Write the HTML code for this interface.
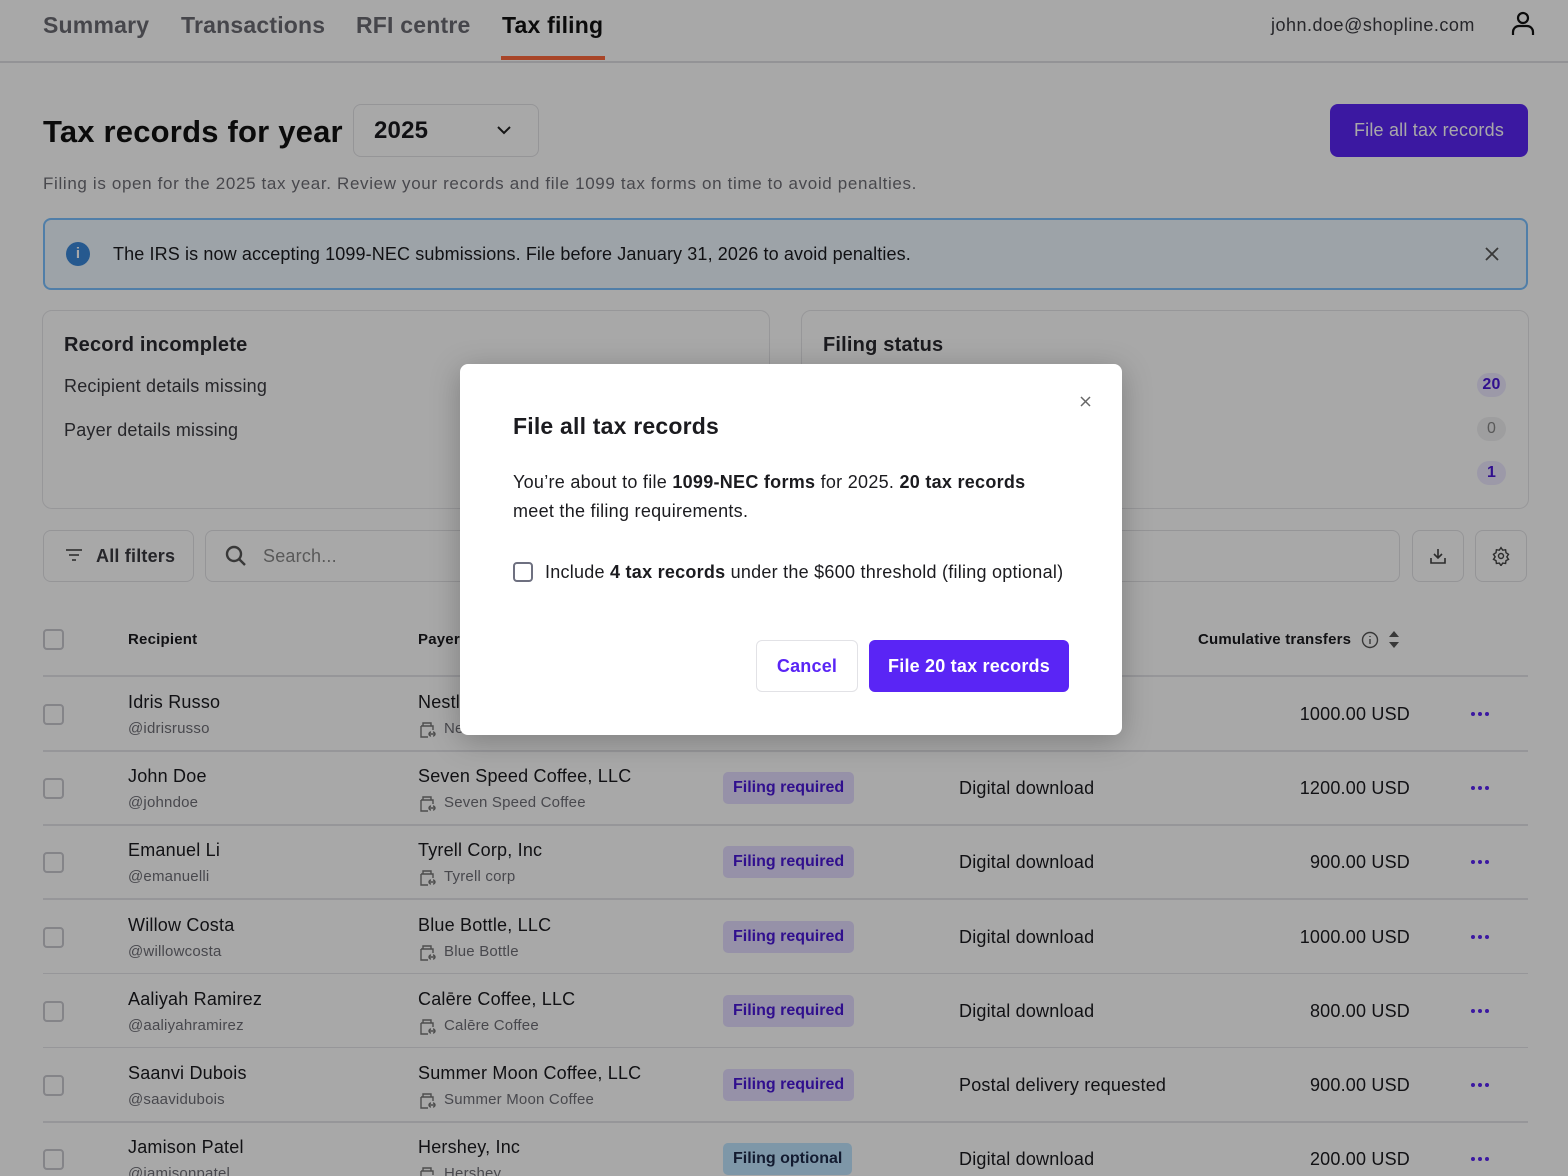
<!DOCTYPE html>
<html style="width:1568px;height:1176px;overflow:hidden"><head><meta charset="utf-8"><style>
*{box-sizing:border-box;margin:0;padding:0}
body{width:1568px;height:1176px;overflow:hidden;background:#fff;font-family:"Liberation Sans",sans-serif;color:#1b1b1f;position:relative;letter-spacing:0.2px}
.a{position:absolute;white-space:nowrap}
.nav{font-size:23px;font-weight:bold;color:#6b6b73;top:12px}
.card{position:absolute;border:1.5px solid #e6e6e9;border-radius:10px}
.btn{position:absolute;border:1.5px solid #e2e2e6;border-radius:8px}
.cb{position:absolute;width:21px;height:21px;border:2px solid #c9c9cf;border-radius:4px;left:43px}
.name{font-size:18px;color:#1b1b1f}
.sub{font-size:15px;color:#6e6e76}
.pill{position:absolute;left:723px;height:32px;border-radius:5px;background:#e4dcff;color:#4a17d8;font-weight:bold;font-size:16px;line-height:32px;padding:0 10px;letter-spacing:0}
.line{position:absolute;left:43px;width:1485px;height:1.5px;background:#e4e4e8}
.dots{position:absolute;left:1471px;font-size:0}
.dots i{display:inline-block;width:4px;height:4px;border-radius:50%;background:#5a25f5;margin-right:3px}
#ov{position:absolute;left:0;top:0;width:1568px;height:1176px;background:rgba(0,0,0,0.34)}
</style></head><body>
<div class="a nav" style="left:43px">Summary</div>
<div class="a nav" style="left:181px">Transactions</div>
<div class="a nav" style="left:356px">RFI centre</div>
<div class="a nav" style="left:502px;color:#111">Tax filing</div>
<div class="a" style="left:501px;top:56px;width:104px;height:4px;background:#ff6a3d"></div>
<div class="a" style="left:0;top:61px;width:1568px;height:1.5px;background:#e0e0e4"></div>
<div class="a" style="left:1271px;top:15px;font-size:18px;color:#3a3a40;letter-spacing:0.5px">john.doe@shopline.com</div>
<svg class="a" style="left:1510px;top:10px" width="26" height="26" viewBox="0 0 26 26" fill="none" stroke="#111" stroke-width="2.2"><circle cx="13" cy="8" r="5"/><path d="M3 25v-3a6 6 0 0 1 6-6h8a6 6 0 0 1 6 6v3"/></svg>

<div class="a" style="left:43px;top:114px;font-size:31px;font-weight:bold;color:#111">Tax records for year</div>
<div class="btn" style="left:353px;top:104px;width:186px;height:53px"></div>
<div class="a" style="left:374px;top:117px;font-size:24px;font-weight:bold">2025</div>
<svg class="a" style="left:496px;top:124px" width="16" height="12" viewBox="0 0 16 12" fill="none" stroke="#222" stroke-width="2"><path d="M2 3l6 6 6-6"/></svg>
<div class="a" style="left:1330px;top:104px;width:198px;height:53px;border-radius:8px;background:#5a25f5;color:#fff;font-size:18px;line-height:53px;text-align:center">File all tax records</div>
<div class="a" style="left:43px;top:174px;font-size:17px;color:#6e6e76;letter-spacing:0.65px">Filing is open for the 2025 tax year. Review your records and file 1099 tax forms on time to avoid penalties.</div>

<div class="a" style="left:43px;top:218px;width:1485px;height:72px;border:2px solid #7ac0ff;border-radius:8px;background:#eff8ff"></div>
<div class="a" style="left:66px;top:242px;width:24px;height:24px;border-radius:50%;background:#3a87d9;color:#fff;font-size:15px;font-weight:bold;text-align:center;line-height:24px">i</div>
<div class="a" style="left:113px;top:244px;font-size:18px;color:#1b1b1f;letter-spacing:0.12px">The IRS is now accepting 1099-NEC submissions. File before January 31, 2026 to avoid penalties.</div>
<svg class="a" style="left:1484px;top:246px" width="16" height="16" viewBox="0 0 16 16" stroke="#555" stroke-width="1.8"><path d="M2 2l12 12M14 2L2 14"/></svg>

<div class="card" style="left:42px;top:310px;width:728px;height:199px"></div>
<div class="a" style="left:64px;top:334px;font-size:20px;font-weight:bold;color:#2a2a30">Record incomplete</div>
<div class="a" style="left:64px;top:376px;font-size:18px;color:#3a3a40">Recipient details missing</div>
<div class="a" style="left:64px;top:420px;font-size:18px;color:#3a3a40">Payer details missing</div>
<div class="card" style="left:801px;top:310px;width:728px;height:199px"></div>
<div class="a" style="left:823px;top:334px;font-size:20px;font-weight:bold;color:#2a2a30">Filing status</div>
<div class="a" style="left:1477px;top:373px;width:29px;height:24px;border-radius:12px;background:#ede8ff;color:#4a17d8;font-weight:bold;font-size:16px;text-align:center;line-height:24px">20</div>
<div class="a" style="left:1477px;top:417px;width:29px;height:24px;border-radius:12px;background:#f0f0f2;color:#888;font-size:16px;text-align:center;line-height:24px">0</div>
<div class="a" style="left:1477px;top:461px;width:29px;height:24px;border-radius:12px;background:#ede8ff;color:#4a17d8;font-weight:bold;font-size:16px;text-align:center;line-height:24px">1</div>

<div class="btn" style="left:43px;top:530px;width:151px;height:52px"></div>
<svg class="a" style="left:65px;top:548px" width="18" height="14" viewBox="0 0 18 14" stroke="#555" stroke-width="1.8"><path d="M1 2h16M4 7h10M7 12h4"/></svg>
<div class="a" style="left:96px;top:546px;font-size:18px;font-weight:bold;color:#3a3a40">All filters</div>
<div class="btn" style="left:205px;top:530px;width:1195px;height:52px"></div>
<svg class="a" style="left:225px;top:545px" width="22" height="22" viewBox="0 0 22 22" fill="none" stroke="#555" stroke-width="2.4"><circle cx="9" cy="9" r="7"/><path d="M14 14l6 6"/></svg>
<div class="a" style="left:263px;top:546px;font-size:18px;color:#888">Search...</div>
<div class="btn" style="left:1412px;top:530px;width:52px;height:52px"></div>
<svg class="a" style="left:1429px;top:547px" width="18" height="18" viewBox="0 0 18 18" fill="none" stroke="#444" stroke-width="1.6"><path d="M9 2v9M5 7l4 4 4-4M2 11v5h14v-5"/></svg>
<div class="btn" style="left:1475px;top:530px;width:52px;height:52px"></div>
<svg class="a" style="left:1491px;top:546px" width="20" height="20" viewBox="0 0 24 24" fill="none" stroke="#444" stroke-width="1.7"><circle cx="12" cy="12" r="3"/><path d="M12 2l2 3 3.5-.5.5 3.5 3 2-2 3 2 3-3 1.5-.5 3.5-3.5-.5-2 3-2-3-3.5.5-.5-3.5-3-1.5 2-3-2-3 3-2 .5-3.5L10 5z"/></svg>

<div class="cb" style="top:629px"></div>
<div class="a" style="left:128px;top:631px;font-size:15px;font-weight:bold">Recipient</div>
<div class="a" style="left:418px;top:631px;font-size:15px;font-weight:bold">Payer</div>
<div class="a" style="left:1198px;top:631px;font-size:15px;font-weight:bold">Cumulative transfers</div>
<svg class="a" style="left:1361px;top:631px" width="18" height="18" viewBox="0 0 18 18" fill="none" stroke="#555" stroke-width="1.4"><circle cx="9" cy="9" r="7.5"/><path d="M9 8v5M9 5v1"/></svg>
<svg class="a" style="left:1388px;top:630px" width="12" height="19" viewBox="0 0 12 19" fill="#555"><path d="M6 1l5 6H1zM6 18l5-6H1z"/></svg>
<div class="line" style="top:675px"></div>

<div id="rows"></div>
<script>
var R=[["Idris Russo","@idrisrusso","Nestl\u00e9","Nestl\u00e9","r","Digital download","1000.00 USD"],
["John Doe","@johndoe","Seven Speed Coffee, LLC","Seven Speed Coffee","r","Digital download","1200.00 USD"],
["Emanuel Li","@emanuelli","Tyrell Corp, Inc","Tyrell corp","r","Digital download","900.00 USD"],
["Willow Costa","@willowcosta","Blue Bottle, LLC","Blue Bottle","r","Digital download","1000.00 USD"],
["Aaliyah Ramirez","@aaliyahramirez","Cal\u0113re Coffee, LLC","Cal\u0113re Coffee","r","Digital download","800.00 USD"],
["Saanvi Dubois","@saavidubois","Summer Moon Coffee, LLC","Summer Moon Coffee","r","Postal delivery requested","900.00 USD"],
["Jamison Patel","@jamisonpatel","Hershey, Inc","Hershey","o","Digital download","200.00 USD"]];
var h="";
R.forEach(function(r,i){var c=714+i*74.2;var t=c-26;
h+='<div class="cb" style="top:'+(c-10)+'px"></div>';
h+='<div class="a name" style="left:128px;top:'+(t+4)+'px">'+r[0]+'</div>';
h+='<div class="a sub" style="left:128px;top:'+(t+32)+'px">'+r[1]+'</div>';
h+='<div class="a name" style="left:418px;top:'+(t+4)+'px">'+r[2]+'</div>';
h+='<svg class="a" style="left:419px;top:'+(t+33)+'px" width="18" height="18" viewBox="0 0 18 18" fill="none" stroke="#777" stroke-width="1.4"><path d="M4 5V2h8v3M2 5h12v4M2 5v11h7M10 13h6M12 11a2 2 0 1 0 0 4M14 11a2 2 0 1 1 0 4"/></svg>';
h+='<div class="a sub" style="left:444px;top:'+(t+32)+'px">'+r[3]+'</div>';
if(i>0)h+='<div class="pill" style="top:'+(c-16)+'px;'+(r[4]=="o"?'background:#bfe6ff;color:#1e2a4a':'')+'">Filing '+(r[4]=="o"?'optional':'required')+'</div>';
if(i>0)h+='<div class="a name" style="left:959px;top:'+(c-10)+'px">'+r[5]+'</div>';
h+='<div class="a name" style="right:158px;top:'+(c-10)+'px">'+r[6]+'</div>';
h+='<div class="dots" style="top:'+(c-2)+'px"><i></i><i></i><i></i></div>';
if(i<6)h+='<div class="line" style="top:'+(c+36)+'px"></div>';});
document.getElementById("rows").innerHTML=h;
</script>

<div id="ov"></div>
<div class="a" style="left:460px;top:364px;width:662px;height:371px;background:#fff;border-radius:8px;box-shadow:0 6px 30px rgba(0,0,0,0.25)"></div>
<svg class="a" style="left:1080px;top:396px" width="11" height="11" viewBox="0 0 11 11" stroke="#666" stroke-width="1.5"><path d="M1 1l9 9M10 1L1 10"/></svg>
<div class="a" style="left:513px;top:413px;font-size:23px;font-weight:bold;color:#1b1b1f">File all tax records</div>
<div class="a" style="left:513px;top:468px;font-size:18px;line-height:29px;color:#1b1b1f;letter-spacing:0.28px">You’re about to file <b>1099-NEC forms</b> for 2025. <b>20 tax records</b><br>meet the filing requirements.</div>
<div class="a" style="left:513px;top:562px;width:20px;height:20px;border:2px solid #6e7080;border-radius:4px"></div>
<div class="a" style="left:545px;top:562px;font-size:18px;color:#1b1b1f;letter-spacing:0.25px">Include <b>4 tax records</b> under the $600 threshold (filing optional)</div>
<div class="a" style="left:756px;top:640px;width:102px;height:52px;border:1.5px solid #e2e2e6;border-radius:6px;color:#5a25f5;font-size:18px;font-weight:bold;text-align:center;line-height:50px">Cancel</div>
<div class="a" style="left:869px;top:640px;width:200px;height:52px;border-radius:6px;background:#5a25f5;color:#fff;font-size:18px;font-weight:bold;text-align:center;line-height:52px">File 20 tax records</div>
</body></html>
